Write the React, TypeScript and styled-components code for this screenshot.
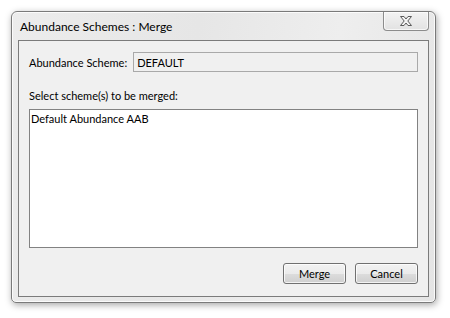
import React from 'react';
import styled, { createGlobalStyle } from 'styled-components';

const GlobalStyle = createGlobalStyle`
  html, body {
    margin: 0;
    padding: 0;
    background: #fff;
  }
  body {
    font-family: Lato, "Liberation Sans", sans-serif;
    font-size: 11px;
    color: #000;
  }
`;

const App: React.FC = () => {
  return (
    <>
      <GlobalStyle />
      <Page>
        <Window>
          <TitleBar>
            <Title>Abundance Schemes : Merge</Title>
            <CloseButton>
              <svg width="16" height="12" viewBox="0 0 16 12">
                <path
                  d="M2.5 1.5 H6 L8 4 L10 1.5 H13.5 L9.8 6 L13.5 10.5 H10 L8 8 L6 10.5 H2.5 L6.2 6 Z"
                  fill="#f4f4f4"
                  stroke="#5a5a5a"
                  strokeWidth="1"
                  strokeLinejoin="round"
                />
              </svg>
            </CloseButton>
          </TitleBar>
          <Client>
            <FieldRow>
              <Label>Abundance Scheme:</Label>
              <ReadOnlyField>DEFAULT</ReadOnlyField>
            </FieldRow>
            <SectionLabel>Select scheme(s) to be merged:</SectionLabel>
            <ListBox>
              <ListItem>Default Abundance AAB</ListItem>
            </ListBox>
            <ButtonRow>
              <Button>Merge</Button>
              <Button>Cancel</Button>
            </ButtonRow>
          </Client>
        </Window>
      </Page>
    </>
  );
};

const Page = styled.div`
  width: 450px;
  height: 318px;
  padding: 11px 0 0 11px;
  box-sizing: border-box;
`;

const Window = styled.div`
  width: 425px;
  height: 292px;
  box-sizing: border-box;
  border: 1px solid #7a7a7a;
  border-radius: 6px 6px 5px 5px;
  background: linear-gradient(100deg, #ececec 0%, #e6e6e6 40%, #eeeeee 70%, #e4e4e4 100%);
  box-shadow: 1px 2px 7px rgba(0, 0, 0, 0.35), inset 0 0 0 1px rgba(255, 255, 255, 0.8);
  padding: 0 6px 5px 6px;
  display: flex;
  flex-direction: column;
`;

const TitleBar = styled.div`
  height: 28px;
  display: flex;
  align-items: flex-start;
  justify-content: space-between;
`;

const Title = styled.div`
  padding: 7px 0 0 2px;
  font-size: 12px;
  color: #000;
`;

const CloseButton = styled.div`
  width: 46px;
  height: 19px;
  box-sizing: border-box;
  border: 1px solid #8c8c8c;
  border-top: none;
  border-radius: 0 0 4px 4px;
  background: linear-gradient(#f3f3f3, #e2e2e2);
  box-shadow: inset 0 0 0 1px rgba(255, 255, 255, 0.7);
  display: flex;
  align-items: center;
  justify-content: center;
`;

const Client = styled.div`
  flex: 1;
  box-sizing: border-box;
  border: 1px solid #7b7b7b;
  background: #f0f0f0;
  padding: 11px 10px 12px 10px;
  display: flex;
  flex-direction: column;
`;

const FieldRow = styled.div`
  display: flex;
  align-items: center;
  gap: 6px;
`;

const Label = styled.div`
  font-size: 11px;
`;

const ReadOnlyField = styled.div`
  flex: 1;
  height: 20px;
  box-sizing: border-box;
  border: 1px solid #a9a9a9;
  background: #f0f0f0;
  padding: 0 3px;
  display: flex;
  align-items: center;
  font-size: 11px;
`;

const SectionLabel = styled.div`
  margin-top: 17px;
  font-size: 11px;
`;

const ListBox = styled.div`
  margin-top: 7px;
  height: 139px;
  box-sizing: border-box;
  border: 1px solid #828282;
  background: #fff;
  padding: 2px 1px;
`;

const ListItem = styled.div`
  font-size: 11px;
  line-height: 14px;
`;

const ButtonRow = styled.div`
  margin-top: auto;
  display: flex;
  justify-content: flex-end;
  gap: 9px;
`;

const Button = styled.div`
  width: 63px;
  height: 21px;
  box-sizing: border-box;
  border: 1px solid #707070;
  border-radius: 3px;
  background: linear-gradient(#f2f2f2 0%, #ebebeb 50%, #dddddd 51%, #cfcfcf 100%);
  box-shadow: inset 0 0 0 1px rgba(255, 255, 255, 0.75);
  display: flex;
  align-items: center;
  justify-content: center;
  font-size: 11px;
`;

export default App;
